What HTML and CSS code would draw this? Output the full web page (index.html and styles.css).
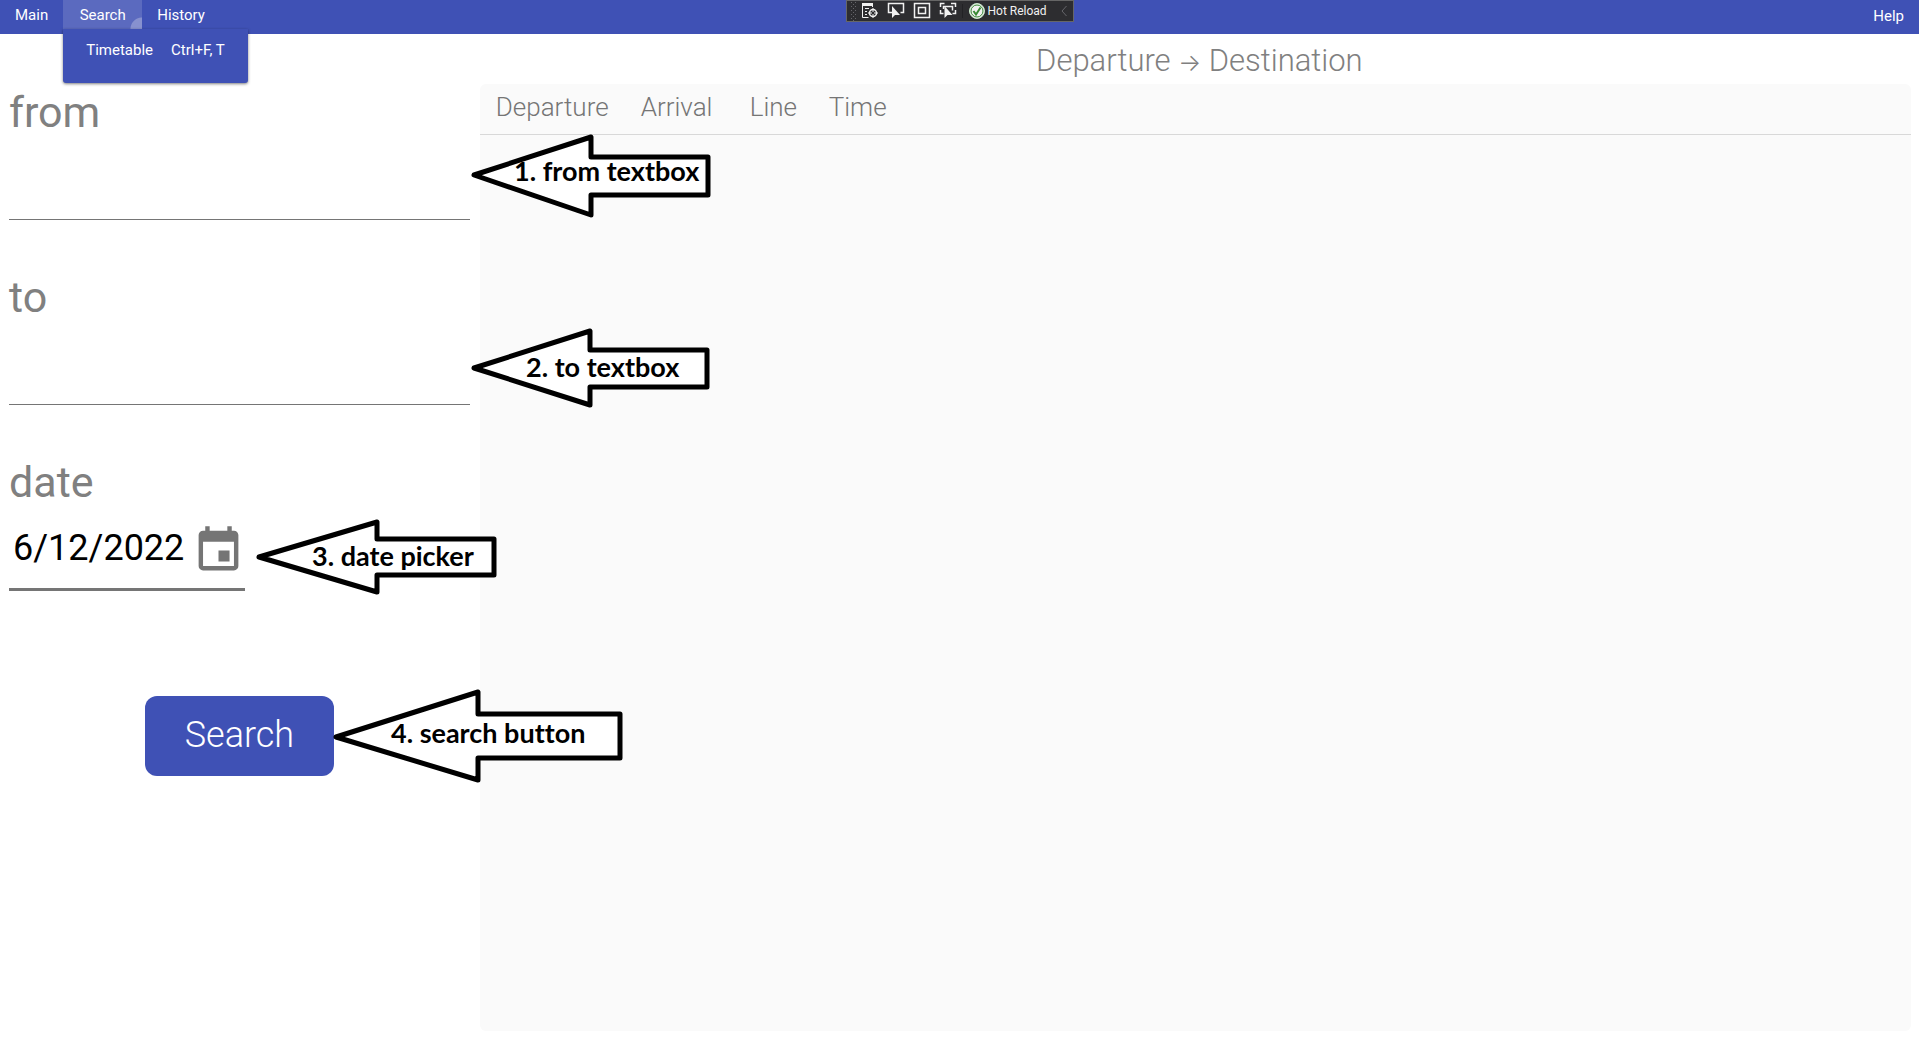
FILE: index.html
```html
<!DOCTYPE html>
<html lang="en">
<head>
<meta charset="utf-8">
<title>Timetable</title>
<link rel="stylesheet" href="styles.css">
</head>
<body>
<header class="menubar">
  <nav class="menu">
    <button class="menu-item" type="button">Main</button>
    <div class="menu-group">
      <button class="menu-item menu-item-open" type="button">Search</button>
      <div class="dropdown">
        <button class="dropdown-item" type="button"><span>Timetable</span><span>Ctrl+F, T</span></button>
      </div>
    </div>
    <button class="menu-item" type="button">History</button>
  </nav>
  <button class="menu-item menu-help" type="button">Help</button>
</header>

<div class="debugbar">
  <svg class="debug-icons" width="141" height="20" viewBox="0 0 141 20" fill="none" stroke="#f1f1f1">
    <path d="M4.500 1v17M8.500 1v17M6.500 3v17" stroke="#66666a" stroke-dasharray="1 3"/>
    <path d="M15 3.500h11" stroke-width="3"/>
    <path d="M15.500 2v14.500h6M25.500 2v4M18 7.500h4M18 10.500h2M18 13.500h2"/>
    <circle cx="26" cy="12" r="3.500" stroke-width="1.500"/>
    <path d="M26 7v4M26 13v4M21 12h4M27 12h4"/>
    <path d="M45 11.500h-3.500v-9h15v9h-3" stroke-width="1.500"/>
    <path d="M45 5v12l3-3 5 0z" fill="#f1f1f1" stroke="none"/>
    <path d="M67.500 2.500h15v14h-15zM71.500 6.500h7v6h-7z" stroke-width="1.500"/>
    <path d="M93.500 6v-3.500h4M104 2.500h4.500v3.500M93.500 9v3.500h3M108.500 9v3.500h-3M96.500 8V5.500h9v4" stroke-width="1.500"/>
    <path d="M97.500 5v12l3-3h5z" fill="#f1f1f1" stroke="none"/>
    <path d="M115.500 3v14" stroke="#222225"/>
    <circle cx="130" cy="10" r="7.500" fill="#f1f1f1" stroke="#c8e6c9"/>
    <circle cx="130" cy="10" r="6" stroke="#388a34"/>
    <path d="M126.500 10l2.500 3.500 4.500-7" stroke="#388a34" stroke-width="2"/>
  </svg>
  <span class="debug-text">Hot Reload</span>
  <svg class="debug-chevron" width="6" height="12" viewBox="0 0 6 12" fill="none" stroke="#66666a"><path d="M5.500 1L1 6l4.500 5"/></svg>
</div>

<main class="page">
  <form class="search-form">
    <div class="field">
      <label class="field-label" for="from">from</label>
      <input class="field-input" id="from" type="text">
    </div>
    <div class="field">
      <label class="field-label" for="to">to</label>
      <input class="field-input" id="to" type="text">
    </div>
    <div class="field field-date">
      <label class="field-label" for="date">date</label>
      <div class="date-picker">
        <input class="date-input" id="date" type="text" value="6/12/2022">
        <button class="date-button" type="button" aria-label="Open calendar">
          <svg width="53" height="53" viewBox="0 0 24 24" fill="#757575"><path d="M19,19H5V8H19M16,1V3H8V1H6V3H5C3.890,3 3,3.890 3,5V19A2,2 0 0,0 5,21H19A2,2 0 0,0 21,19V5C21,3.890 20.100,3 19,3H18V1M17,12H12V17H17V12Z"/></svg>
        </button>
      </div>
    </div>
    <button class="search-button" type="button">Search</button>
  </form>

  <section class="results">
    <h1 class="results-title">Departure <span class="arrow">→</span> Destination</h1>
    <div class="results-card">
      <table class="results-table">
        <colgroup><col class="col-departure"><col class="col-arrival"><col class="col-line"><col></colgroup>
        <thead>
          <tr><th>Departure</th><th>Arrival</th><th>Line</th><th>Time</th></tr>
        </thead>
      </table>
    </div>
  </section>
</main>

<div class="callout callout-from">
  <svg width="240" height="84" viewBox="0 0 240 84"><path d="M4 41L121 3V23H238V61H121V81Z"/></svg>
  <span>1. from textbox</span>
</div>
<div class="callout callout-to">
  <svg width="240" height="84" viewBox="0 0 240 84"><path d="M4 42L120 5V24H237V61H120V79Z"/></svg>
  <span>2. to textbox</span>
</div>
<div class="callout callout-date">
  <svg width="240" height="84" viewBox="0 0 240 84"><path d="M4 42L122 7V24H239V60H122V77Z"/></svg>
  <span>3. date picker</span>
</div>
<div class="callout callout-search">
  <svg width="290" height="96" viewBox="0 0 290 96"><path d="M4 49L146 4V26H288V70H146V92Z"/></svg>
  <span>4. search button</span>
</div>
</body>
</html>
```
FILE: styles.css
```css
* { box-sizing: border-box; }

body {
  position: relative;
  display: flex;
  flex-direction: column;
  min-height: 100vh;
  margin: 0;
  background: #fff;
  color: #757575;
  font-family: Roboto, "Liberation Sans", sans-serif;
}

button {
  margin: 0;
  border: 0;
  background: none;
  color: inherit;
  font: inherit;
}

input { font: inherit; }

/* Menu bar */
.menubar {
  display: flex;
  justify-content: space-between;
  height: 34px;
  background: #3f51b5;
  color: #fff;
  font-size: 15px;
}

.menu { display: flex; }

.menu-group { position: relative; }

.menu-item {
  height: 29px;
  padding: 0 15px;
}

.menu-item-open {
  width: 79px;
  background: radial-gradient(circle at 100% 100%, #8791cf 11px, #5b6abf 12px);
}

.menu-help { height: 32px; }

.dropdown {
  position: absolute;
  top: 29px;
  left: 0;
  z-index: 2;
  height: 54px;
  border-radius: 0 0 3px 3px;
  background: #3f51b5;
  box-shadow: 0 1px 3px rgba(0, 0, 0, 0.5);
}

.dropdown-item {
  display: flex;
  gap: 18px;
  align-items: center;
  height: 42px;
  padding: 0 23px;
  font-size: 15px;
  white-space: nowrap;
}

/* Debugger overlay */
.debugbar {
  position: absolute;
  top: 0;
  left: 50%;
  display: flex;
  align-items: center;
  width: 228px;
  height: 22px;
  margin-left: -114px;
  padding-right: 6px;
  border: 1px solid #666;
  background: #2d2d30;
  color: #f1f1f1;
  font: 12px/22px Roboto, sans-serif;
}

.debug-icons { flex: none; }

.debug-text { white-space: nowrap; }

.debug-chevron { margin-left: auto; }

/* Page */
.page {
  display: grid;
  flex: 1;
  grid-template-columns: 1fr 3fr;
}

.search-form {
  display: flex;
  flex-direction: column;
  padding: 50px 10px 0 9px;
}

.field {
  display: flex;
  flex-direction: column;
  margin-bottom: 49px;
}

.field-label {
  height: 54px;
  color: #808080;
  font-size: 43px;
  font-weight: 400;
  line-height: 56px;
}

.field-input {
  width: 100%;
  height: 82px;
  padding: 0;
  border: 0;
  border-bottom: 1px solid #757575;
  border-radius: 0;
  background: none;
  font-size: 36px;
}

.field-date { margin-bottom: 105px; }

.date-picker {
  display: flex;
  justify-content: space-between;
  width: 236px;
  height: 83px;
  border-bottom: 3px solid #757575;
}

.date-input {
  width: 180px;
  height: 80px;
  padding: 0 0 0 4px;
  border: 0;
  background: none;
  color: #000;
  font-size: 36px;
  font-weight: 400;
}

.date-button {
  height: 80px;
  padding: 8px 0 0;
}

.search-button {
  align-self: center;
  width: 189px;
  height: 80px;
  padding: 0 0 2px;
  border-radius: 12px;
  background: #3f51b5;
  color: #fff;
  font-size: 36px;
  font-weight: 300;
}

/* Results */
.results {
  display: flex;
  flex-direction: column;
}

.results-title {
  height: 50px;
  margin: 0;
  padding-top: 4px;
  color: #808080;
  font-size: 31px;
  font-weight: 300;
  line-height: 46px;
  text-align: center;
}

.results-title .arrow {
  font-family: Inter, sans-serif;
  font-size: 24px;
}

.results-card {
  flex: 1;
  margin: 0 8px 8px 0;
  border-radius: 6px;
  background: #fafafa;
}

.results-table {
  width: 100%;
  border-collapse: collapse;
  table-layout: fixed;
}

.results-table th {
  height: 50px;
  padding: 0 0 3px 16px;
  border-bottom: 1px solid #d8d8d8;
  font-size: 26px;
  font-weight: 300;
  text-align: left;
}

.col-departure { width: 145px; }
.col-arrival { width: 109px; }
.col-line { width: 79px; }

/* Annotation arrows drawn over the window */
.callout {
  position: absolute;
  z-index: 3;
  display: flex;
  color: #000;
  font: bold 27px/82px Lato, sans-serif;
  font-variant-ligatures: none;
  white-space: nowrap;
}

.callout svg {
  position: absolute;
  top: 0;
  left: 0;
  z-index: -1;
  overflow: visible;
  fill: #fff;
  stroke: #000;
  stroke-width: 5px;
  stroke-linejoin: round;
}

.callout-from { top: 134px; left: 470px; padding-left: 44px; line-height: 74px; }
.callout-to { top: 326px; left: 470px; padding-left: 56px; }
.callout-date { top: 515px; left: 255px; padding-left: 57px; }
.callout-search { top: 688px; left: 332px; padding-left: 59px; line-height: 90px; }
```
